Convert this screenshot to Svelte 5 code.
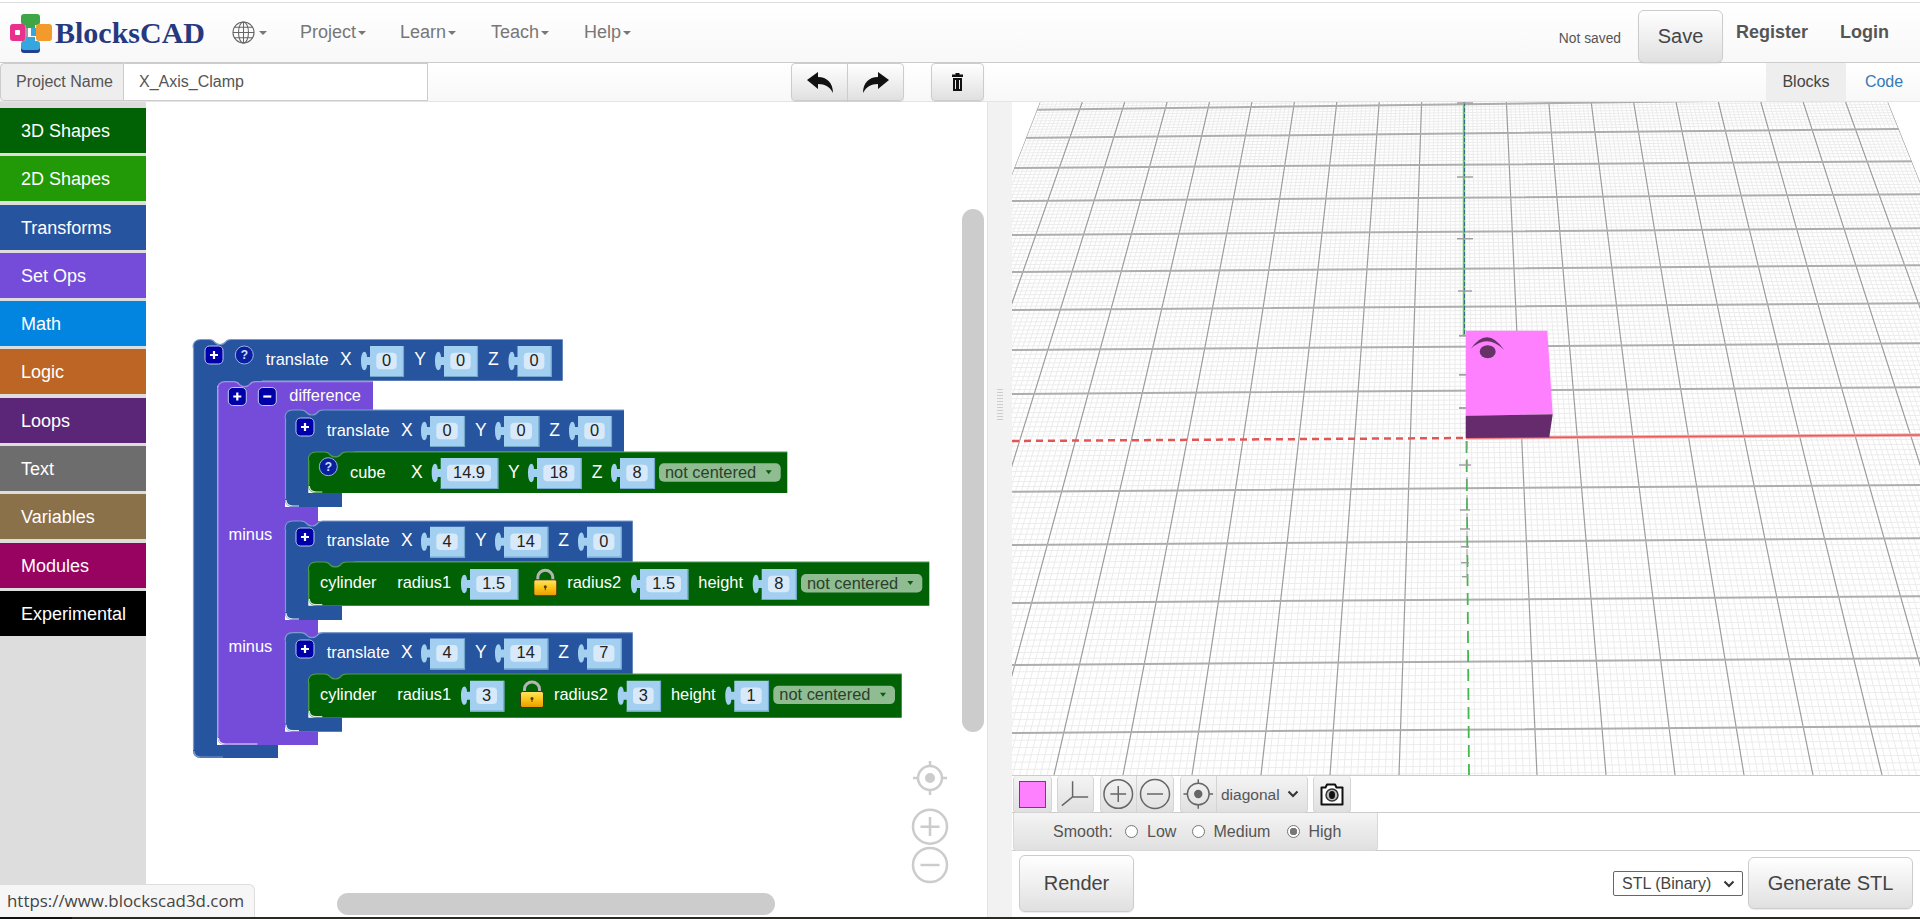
<script>
	const categories = [
		{ name: '3D Shapes', color: '#006205' },
		{ name: '2D Shapes', color: '#229906' },
		{ name: 'Transforms', color: '#26549e' },
		{ name: 'Set Ops', color: '#744cd9' },
		{ name: 'Math', color: '#0185e0' },
		{ name: 'Logic', color: '#bd6524' },
		{ name: 'Loops', color: '#5b2678' },
		{ name: 'Text', color: '#6d6d6d' },
		{ name: 'Variables', color: '#8a714a' },
		{ name: 'Modules', color: '#980261' },
		{ name: 'Experimental', color: '#000000' }
	];
	const navItems = [
		{ name: 'Project', width: 100 },
		{ name: 'Learn', width: 91 },
		{ name: 'Teach', width: 93 },
		{ name: 'Help', width: 60 }
	];

	// grid of the 3D view, in page coordinates
	const vp = { x: 1457.6, y: -971 };
	const gridX = (k, y) => vp.x + (y - vp.y) * (0.03952 * k + 0.00594);
	const rows = [84, 110, 138, 168, 201, 235, 272, 310, 350, 394, 441, 491.7, 545, 603, 665, 733, 806];
	const slope = (i) => 0.0075 + 0.008 * Math.max(0, 3 - i) / 3;
	function hLine(y, s) {
		return `M1012 ${y.toFixed(1)}L1920 ${(y - 908 * s).toFixed(1)}`;
	}
	let minorD = '';
	for (let k = -100; k <= 100; k++) {
		if (k % 10) minorD += `M${gridX(k / 10, 102).toFixed(1)} 102L${gridX(k / 10, 775).toFixed(1)} 775`;
	}
	for (let i = 0; i < rows.length - 1; i++) {
		for (let j = 1; j < 10; j++) {
			minorD += hLine(rows[i] + ((rows[i + 1] - rows[i]) * j) / 10, slope(i));
		}
	}
	let majorV = '';
	for (let k = -10; k <= 10; k++) {
		if (k) majorV += `M${gridX(k, 102).toFixed(1)} 102L${gridX(k, 775).toFixed(1)} 775`;
	}
	const majorH = rows.filter((y) => y !== 441).map((y) => hLine(y, slope(rows.indexOf(y)))).join('');
	const plane = `${gridX(-10, 102)},102 ${gridX(10, 102)},102 ${gridX(10, 775)},775 ${gridX(-10, 775)},775`;
	const ticks = [
		[103, 16], [177, 16], [238.7, 16], [291, 14], [335.7, 12], [374.7, 12], [408, 12],
		[465, 12], [510, 10], [529, 10], [546.7, 8], [562.7, 8], [576.7, 6]
	];

	// blocks
	const notch = 'q4 0 6 3q2 2 5 2q3 0 5-2q2-3 6-3';
	const top = (x, t, r) => `M${x} ${t + 8}Q${x} ${t} ${x + 8} ${t}H${x + 16}${notch}H${r}`;
	const cBlock = (x, t, r, hb, ix, ib, tr, b) =>
		`${top(x, t, r)}V${hb}H${ix + 46}V${hb + 5}H${ix}V${ib}H${tr}V${b}H${x + 8}Q${x} ${b} ${x} ${b - 8}Z`;
	const stmt = (x, t, r, b) => `${top(x, t, r)}V${b}H${x + 8}Q${x} ${b} ${x} ${b - 8}Z`;
	const corner = (x, b, w) => `M${x + 1} ${b - 7}Q${x + 1} ${b - 1} ${x + 8} ${b - 1}H${x + w}`;

	const blue = [
		[285, 410, 624, 451.7, 308.3, 493, 342, 507],
		[285, 521, 632.7, 561.7, 308.3, 605.7, 342, 620],
		[285, 632.7, 632.7, 674, 308.3, 717.7, 342, 731.7]
	];
	const green = [
		[308.3, 452, 787.3, 493],
		[308.3, 562, 929.3, 605.7],
		[308.3, 674, 901.7, 717.7]
	];
	const outer = `${top(193, 339.5, 562.7)}V380.7H262V386H217V745H278V758H201Q193 758 193 750Z`;
	const purple = `${top(217.5, 381.7, 373)}V410H330V415H285V507H318V521H330V526H285V620H318V632.7H330V637H285V731.7H318V745H226Q217.5 745 217.5 737Z`;

	const labels = [
		['translate', 265.7, 365], ['X', 340, 365], ['Y', 414.3, 365], ['Z', 488, 365],
		['difference', 289.3, 401],
		['translate', 326.7, 436], ['X', 401, 436], ['Y', 475, 436], ['Z', 549.3, 436],
		['cube', 350, 478], ['X', 411, 478], ['Y', 508, 478], ['Z', 591.7, 478],
		['minus', 228.5, 540],
		['translate', 326.7, 546], ['X', 401, 546], ['Y', 475, 546], ['Z', 558.3, 546],
		['cylinder', 320, 588], ['radius1', 397.3, 588], ['radius2', 567.3, 588], ['height', 698.3, 588],
		['minus', 228.5, 652],
		['translate', 326.7, 658], ['X', 401, 658], ['Y', 475, 658], ['Z', 558.3, 658],
		['cylinder', 320, 700], ['radius1', 397.3, 700], ['radius2', 554, 700], ['height', 671, 700]
	];
	// [value, body left, body right, top]
	const plugs = [
		['0', 370, 404, 346], ['0', 444, 478, 346], ['0', 517.5, 551.7, 346],
		['0', 430, 465, 416], ['0', 504, 539.3, 416], ['0', 578, 612, 416],
		['14.9', 440.7, 498.3, 458], ['18', 537, 581.7, 458], ['8', 620, 655, 458],
		['4', 430, 465, 526.7], ['14', 504, 548.3, 526.7], ['0', 587, 621.7, 526.7],
		['1.5', 470, 518.3, 569], ['1.5', 640, 688.3, 569], ['8', 761.7, 796.7, 569],
		['4', 430, 465, 638.4], ['14', 504, 548.3, 638.4], ['7', 587, 621.7, 638.4],
		['3', 470, 504.3, 680.7], ['3', 626.7, 661, 680.7], ['1', 734.3, 769, 680.7]
	];
	const plugPath = (b, r, y) =>
		`M${b} ${y}H${r}V${y + 31}H${b}V${y + 19}H${b - 3}C${b - 3} ${y + 26} ${b - 9} ${y + 27} ${b - 9} ${y + 15}C${b - 9} ${y + 3} ${b - 3} ${y + 4} ${b - 3} ${y + 11}H${b}Z`;
	const notCentered = [[659, 780.7, 463.3], [801, 922.3, 574], [773.3, 895, 685.7]];
	const plusButtons = [[205, 346], [228.3, 387.5], [296, 418], [296, 528], [296, 640]];
	const helpButtons = [[244.3, 355], [328.3, 466.7]];
	const locks = [[533.3, 569.3], [520, 681]];
</script>

<div class="page">
	<header class="navbar">
		<div class="brand">
			<svg class="logo" viewBox="0 0 46 40" width="46" height="40">
				<path d="M12 10h6v20h-6z" fill="#9a9aa0" />
				<rect x="11" y="0" width="19" height="11" rx="3" fill="#3fa648" />
				<rect x="16" y="8" width="9" height="6" fill="#3fa648" />
				<rect x="11" y="30" width="19" height="9" rx="3" fill="#23408f" />
				<rect x="11" y="27" width="19" height="9" rx="3" fill="#35a6e0" />
				<rect x="16" y="23" width="9" height="7" fill="#35a6e0" />
				<rect x="0" y="10" width="15" height="17" rx="3" fill="#e8308c" />
				<rect x="5" y="16" width="5" height="5" rx="1" fill="#fff" />
				<rect x="26" y="10" width="16" height="17" rx="3" fill="#f39a2d" />
				<rect x="21" y="14" width="5" height="8" fill="#35a6e0" />
			</svg>
			<span class="brand-name">BlocksCAD</span>
		</div>
		<div class="globe">
			<svg viewBox="0 0 24 24" width="23" height="23" fill="none" stroke="#666" stroke-width="1.1">
				<circle cx="12" cy="12" r="11" />
				<ellipse cx="12" cy="12" rx="5.2" ry="11" />
				<path d="M12 1v22M1 12h22M2.5 6.5h19M2.5 17.500h19" />
			</svg>
			<span class="caret"></span>
		</div>
		<nav class="menu">
			{#each navItems as item}
				<span class="menu-item" style="width: {item.width}px">{item.name}<span class="caret"></span></span>
			{/each}
		</nav>
		<div class="nav-right">
			<span class="not-saved">Not saved</span>
			<button class="btn save">Save</button>
			<span class="auth register">Register</span>
			<span class="auth login">Login</span>
		</div>
	</header>

	<div class="subbar">
		<div class="project-group">
			<span class="addon">Project Name</span>
			<input class="project-input" value="X_Axis_Clamp" />
		</div>
		<div class="history">
			<button class="btn icon-btn left-btn" aria-label="undo">
				<svg viewBox="0 0 26 21" width="26" height="21"><path d="M0 8 11 0v5c9 0 15 6 15 16-3-6-8-9-15-9v5z" /></svg>
			</button>
			<button class="btn icon-btn right-btn" aria-label="redo">
				<svg viewBox="0 0 26 21" width="26" height="21"><path d="M26 8 15 0v5C6 5 0 11 0 21c3-6 8-9 15-9v5z" /></svg>
			</button>
			<button class="btn icon-btn trash" aria-label="delete">
				<svg viewBox="0 0 11 18" width="11" height="18"><path d="M3.500 0h4v1.500h3.500v2.500H0V1.500h3.500zM1 5h9v13H1zM3 7v9h1V7zm4 0v9h1V7z" fill-rule="evenodd" /></svg>
			</button>
		</div>
		<div class="tabs">
			<span class="tab active">Blocks</span>
			<span class="tab code">Code</span>
		</div>
	</div>

	<main class="main">
		<aside class="toolbox">
			{#each categories as cat}
				<div class="category" style="background: {cat.color}">{cat.name}</div>
			{/each}
		</aside>

		<section class="workspace">
			<svg class="blocks" viewBox="146 102 841 815">
				<defs>
					<linearGradient id="gold" x1="0" y1="0" x2="0" y2="1">
						<stop offset="0" stop-color="#ffe566" />
						<stop offset="0.5" stop-color="#fbc515" />
						<stop offset="1" stop-color="#e79a00" />
					</linearGradient>
				</defs>
				<path d={outer} fill="#26549e" />
				<path d={top(193, 339.5, 562.7)} class="edge" stroke="#7c9ccd" />
				<path d={corner(193, 758, 30)} class="edge" stroke="#7c9ccd" />
				<path d="M193.500 347V750" class="edge" stroke="#7c9ccd" />
				<path d={purple} fill="#744cd9" />
				<path d={top(217.5, 381.7, 373)} class="edge" stroke="#a68ee8" />
				<path d="M218 389V737" class="edge" stroke="#a68ee8" />
				<path d={corner(217.5, 745, 40)} class="edge" stroke="#e8e0fa" />
				{#each blue as b}
					<path d={cBlock(...b)} fill="#26549e" />
					<path d={top(b[0], b[1], b[2])} class="edge" stroke="#7c9ccd" />
					<path d="M{b[0] + 0.5} {b[1] + 8}V{b[7] - 8}" class="edge" stroke="#7c9ccd" />
					<path d={corner(b[0], b[7], 14)} class="edge" stroke="#dfe8f5" />
				{/each}
				{#each green as g}
					<path d={stmt(...g)} fill="#006205" />
					<path d={top(g[0], g[1], g[2])} class="edge" stroke="#4f9a53" />
					<path d="M{g[0] + 0.5} {g[1] + 8}V{g[3] - 8}" class="edge" stroke="#4f9a53" />
					<path d={corner(g[0], g[3], 14)} class="edge" stroke="#d6e8d7" />
				{/each}

				{#each plugs as [value, b, r, y]}
					<path d={plugPath(b, r, y)} fill="#a3d0f0" />
					<path d="M{b} {y + 30.500}H{r - 0.5}V{y}" class="edge" stroke="#74a7cc" />
					<rect x={b + 6.3} y={y + 6.7} width={r - b - 13.6} height="16.600" rx="4" fill="#d8e9f9" />
					<text class="value" x={(b + r - 1) / 2} y={y + 20}>{value}</text>
				{/each}

				{#each labels as [text, x, y]}
					<text class="label" class:axis-letter={text.length === 1} {x} {y}>{text}</text>
				{/each}

				{#each notCentered as [x, r, y]}
					<rect {x} {y} width={r - x} height="18.400" rx="5" fill="#8fbd91" />
					<text class="drop-text" x={x + 6} y={y + 14.7}>not centered</text>
					<path d="M{r - 15} {y + 7}h6l-3 4z" fill="#0d5c12" />
				{/each}

				{#each plusButtons as [x, y]}
					<rect {x} {y} width="18" height="18" rx="4.500" class="small-btn" />
					<path d="M{x + 5} {y + 9}h8M{x + 9} {y + 5}v8" class="glyph" />
				{/each}
				<rect x="258.300" y="387.500" width="18" height="18" rx="4.500" class="small-btn" />
				<path d="M263.300 396.500h8" class="glyph" />
				{#each helpButtons as [cx, cy]}
					<circle {cx} {cy} r="9" class="help-btn" />
					<text class="help-text" x={cx} y={cy + 4}>?</text>
				{/each}

				{#each locks as [x, y]}
					<path d="M{x + 4.5} {y + 11}v-3a7.500 7 0 0 1 15 0v3" fill="none" stroke="#b4b4b4" stroke-width="3" />
					<rect x={x + 0.5} y={y + 10.500} width="23" height="16" rx="2" fill="url(#gold)" stroke="#3e3210" />
					<circle cx={x + 12} cy={y + 17.500} r="1.500" fill="#5a3c00" />
					<path d="M{x + 11.5} {y + 18}h1v3h-1z" fill="#5a3c00" />
				{/each}

				<g class="controls">
					<circle cx="930" cy="778" r="12" />
					<circle cx="930" cy="778" r="5" class="dot" />
					<path d="M930 761v6M930 789v6M913 778h6M941 778h6" />
					<circle cx="930" cy="826.700" r="17" />
					<path d="M930 817v19M920.500 826.700h19" />
					<circle cx="930" cy="865" r="17" />
					<path d="M920.500 865h19" />
				</g>
			</svg>
			<div class="scroll-v"></div>
			<div class="scroll-h"></div>
			<div class="status">https://www.blockscad3d.com</div>
		</section>

		<div class="splitter"><span class="grip"></span></div>

		<section class="viewer-pane">
			<div class="viewer">
				<svg class="grid" viewBox="1012 102 908 673">
					<clipPath id="plane"><polygon points={plane} /></clipPath>
					<g clip-path="url(#plane)">
						<path d={minorD} class="minor" />
						<path d={majorV} class="major-v" />
						<path d={majorH} class="major-h" />
					</g>
					<path d="M1464 102V335" class="axis-green" />
					<path d="M1464.500 102V335" class="axis-blue" />
					<path d="M1466.500 441L1469 775" class="axis-dash" />
					<path d="M1012 441L1466 438" class="red-dash" />
					<path d="M1466 438L1920 435" class="red-glow" />
					<path d="M1466 438L1920 435" class="red-solid" />
					{#each ticks as [y, w]}
						<path d="M{1465 - w / 2} {y}h{w}" class="tick" />
					{/each}
					<path d="M1467 441V580" class="axis-tick-line" />
					<polygon points="1465.700,330.700 1547.300,330.700 1552.700,414.300 1465.700,415.700" fill="#ff80ff" />
					<polygon points="1465.700,415.700 1552.700,414.300 1549.300,437.300 1465.700,438" fill="#662b6c" />
					<ellipse cx="1487.700" cy="351.700" rx="8" ry="6.500" fill="#663366" />
					<path d="M1470.700 349Q1487 325 1504.300 350Q1487 333 1470.700 349Z" fill="#663366" />
					{#each ticks.slice(4, 7) as [y]}
						<path d="M1459 {y}h7" class="tick" />
					{/each}
				</svg>
			</div>

			<div class="view-tools">
				<button class="tool swatch-btn" aria-label="color"><span class="swatch"></span></button>
				<button class="tool axis-btn" aria-label="axes">
					<svg viewBox="0 0 36 36" width="36" height="36"><path d="M15 5v16h16M15 21 4 30" /></svg>
				</button>
				<div class="tool-group">
					<button class="tool joined" aria-label="zoom in">
						<svg viewBox="0 0 36 36" width="36" height="36"><circle cx="17.500" cy="18" r="14.500" /><path d="M17.500 10v16M9.500 18h16" /></svg>
					</button>
					<button class="tool joined-end" aria-label="zoom out">
						<svg viewBox="0 0 36 36" width="36" height="36"><circle cx="18" cy="18" r="14.500" /><path d="M10 18h16" /></svg>
					</button>
				</div>
				<div class="tool-group">
					<button class="tool joined" aria-label="reset view">
						<svg viewBox="0 0 36 36" width="36" height="36"><circle cx="17.500" cy="18" r="11" /><circle cx="17.500" cy="18" r="3.500" class="filled" /><path d="M17.500 3v4M17.500 29v4M2.500 18h4M28.500 18h4" /></svg>
					</button>
					<div class="tool joined-end view-select">
						<select class="diagonal"><option>diagonal</option></select>
						<svg class="chevron" viewBox="0 0 12 8" width="12" height="8"><path d="M1.500 1.500 6 6l4.500-4.500" /></svg>
					</div>
				</div>
				<button class="tool camera" aria-label="camera">
					<svg viewBox="0 0 24 24" width="24" height="24">
						<path d="M1.500 5.500h4l1.500-3h8l1.500 3h6v17h-21z" fill="#fff" stroke="#111" stroke-width="2" stroke-linejoin="round" />
						<circle cx="12" cy="13" r="6" fill="#bbb" stroke="#333" />
						<ellipse cx="12" cy="13" rx="3" ry="4" fill="#111" />
					</svg>
				</button>
			</div>

			<div class="smooth-row">
				<div class="smooth">
					<span class="smooth-title">Smooth:</span>
					<label class="opt low"><span class="radio"></span>Low</label>
					<label class="opt medium"><span class="radio"></span>Medium</label>
					<label class="opt"><span class="radio on"></span>High</label>
				</div>
			</div>

			<div class="render-row">
				<button class="btn render">Render</button>
				<div class="stl-select">
					<select class="format"><option>STL (Binary)</option></select>
					<svg class="chevron" viewBox="0 0 12 8" width="12" height="8"><path d="M1.500 1.500 6 6l4.500-4.500" /></svg>
				</div>
				<button class="btn generate">Generate STL</button>
			</div>
		</section>
	</main>

	<div class="bottom-strip"><span class="strip-dark"></span></div>
</div>

<style>
	:global(body) {
		margin: 0;
		background: #fff;
		overflow: hidden;
	}
	.page {
		width: 1920px;
		height: 919px;
		display: flex;
		flex-direction: column;
		font-family: 'Liberation Sans', Arial, sans-serif;
		color: #555;
		position: relative;
		overflow: hidden;
	}
	button {
		font-family: inherit;
		padding: 0;
	}
	.btn {
		background: linear-gradient(#fff, #e0e0e0);
		border: 1px solid #ccc;
		border-radius: 6px;
		color: #444;
		box-shadow: 0 1px 1px rgba(0, 0, 0, 0.08);
	}

	/* top bar */
	.navbar {
		height: 59px;
		margin-top: 2px;
		border-top: 1px solid #ddd;
		border-bottom: 1px solid #ccc;
		background: linear-gradient(#fff, #f8f8f8);
		display: flex;
		align-items: center;
		flex-shrink: 0;
	}
	.brand {
		width: 225px;
		display: flex;
		align-items: center;
		padding-left: 10px;
		box-sizing: border-box;
	}
	.logo {
		flex-shrink: 0;
		margin-top: 2px;
	}
	.brand-name {
		font-family: 'Liberation Serif', serif;
		font-weight: bold;
		font-size: 30px;
		color: #26387e;
		margin-left: -1px;
	}
	.globe {
		width: 75px;
		padding-left: 7px;
		box-sizing: border-box;
		display: flex;
		align-items: center;
		gap: 2px;
	}
	.caret {
		display: inline-block;
		border-top: 4px solid #777;
		border-left: 4px solid transparent;
		border-right: 4px solid transparent;
		margin-left: 2px;
		vertical-align: middle;
	}
	.menu {
		display: flex;
	}
	.menu-item {
		font-size: 18px;
		color: #777;
		white-space: nowrap;
	}
	.nav-right {
		margin-left: auto;
		display: flex;
		align-items: center;
		height: 100%;
		position: relative;
	}
	.not-saved {
		font-size: 13.800px;
		margin-top: 12px;
		margin-right: 17px;
	}
	.save {
		width: 85px;
		height: 53px;
		font-size: 20px;
		margin-top: 7px;
		margin-right: 13px;
	}
	.auth {
		font-size: 18px;
		font-weight: bold;
		margin-top: 0;
	}
	.register {
		margin-right: 32px;
	}
	.login {
		margin-right: 31px;
	}

	/* second bar */
	.subbar {
		height: 39px;
		flex-shrink: 0;
		display: flex;
		align-items: flex-start;
		background: linear-gradient(#fff, #f8f8f8);
		border-bottom: 1px solid #e4e4e4;
		box-sizing: border-box;
	}
	.project-group {
		display: flex;
		height: 38px;
		width: 428px;
		font-size: 16px;
	}
	.addon {
		width: 124px;
		box-sizing: border-box;
		background: #eee;
		border: 1px solid #ccc;
		border-radius: 4px 0 0 4px;
		line-height: 36px;
		padding-left: 15px;
		white-space: nowrap;
	}
	.project-input {
		flex: 1;
		min-width: 0;
		border: 1px solid #ccc;
		border-left: 0;
		background: #fff;
		font: inherit;
		color: #555;
		padding: 0 0 0 15px;
		outline: 0;
	}
	.history {
		margin-left: 363px;
		display: flex;
	}
	.icon-btn {
		width: 57px;
		height: 38px;
		border-radius: 4px;
		display: flex;
		align-items: center;
		justify-content: center;
	}
	.icon-btn svg {
		fill: #111;
	}
	.left-btn {
		border-radius: 4px 0 0 4px;
	}
	.right-btn {
		margin-left: -1px;
		border-radius: 0 4px 4px 0;
	}
	.trash {
		width: 53px;
		margin-left: 27px;
	}
	.tabs {
		margin-left: auto;
		display: flex;
		font-size: 16px;
		height: 38px;
		line-height: 38px;
	}
	.tab {
		text-align: center;
	}
	.tab.active {
		width: 80px;
		background: #eee;
		color: #444;
	}
	.tab.code {
		width: 72px;
		padding-left: 2px;
		color: #337ab7;
	}

	/* main */
	.main {
		flex: 1;
		display: flex;
		min-height: 0;
	}
	.toolbox {
		width: 146px;
		flex-shrink: 0;
		background: #ddd;
		padding-top: 6px;
		box-sizing: border-box;
		display: flex;
		flex-direction: column;
		gap: 3.300px;
	}
	.category {
		height: 45px;
		line-height: 47px;
		padding-left: 21px;
		color: #fff;
		font-size: 18px;
		flex-shrink: 0;
	}
	.workspace {
		width: 841px;
		flex-shrink: 0;
		position: relative;
		background: #fff;
	}
	.blocks {
		display: block;
		width: 100%;
		height: 100%;
	}
	.edge {
		fill: none;
		stroke-width: 1.200;
	}
	.label {
		font-size: 16.400px;
		fill: #fff;
	}
	.axis-letter {
		font-size: 17.500px;
	}
	.value {
		font-size: 16.400px;
		fill: #222;
		text-anchor: middle;
	}
	.drop-text {
		font-size: 16.400px;
		fill: #2b3f2c;
	}
	.small-btn {
		fill: #0000a8;
		stroke: #b8c8ee;
		stroke-width: 1;
	}
	.glyph {
		stroke: #fff;
		stroke-width: 2.200;
		fill: none;
	}
	.help-btn {
		fill: #0a1fa0;
		stroke: #9db2e0;
		stroke-width: 1;
	}
	.help-text {
		font-size: 12px;
		font-weight: bold;
		fill: #cfe0ff;
		text-anchor: middle;
	}
	.controls circle,
	.controls path {
		fill: none;
		stroke: #ccc;
		stroke-width: 2.500;
	}
	.controls .dot {
		fill: #ccc;
		stroke: none;
	}
	.scroll-v {
		position: absolute;
		left: 816px;
		top: 107px;
		width: 22px;
		height: 523px;
		border-radius: 11px;
		background: #ccc;
	}
	.scroll-h {
		position: absolute;
		left: 191px;
		top: 791px;
		width: 438px;
		height: 22px;
		border-radius: 11px;
		background: #ccc;
	}
	.status {
		position: absolute;
		left: -146px;
		bottom: 0;
		width: 255px;
		height: 33px;
		box-sizing: border-box;
		background: #f6f6f6;
		border: 1px solid #ddd;
		border-left: 0;
		border-bottom: 0;
		border-top-right-radius: 6px;
		padding-left: 7px;
		font-family: 'Open Sans', sans-serif;
		font-size: 16.900px;
		line-height: 31px;
		color: #444;
		white-space: nowrap;
	}
	.splitter {
		width: 25px;
		flex-shrink: 0;
		background: #f2f2f2;
		display: flex;
		align-items: center;
		justify-content: center;
		border-left: 1px solid #e4e4e4;
		box-sizing: border-box;
	}
	.grip {
		display: block;
		width: 6px;
		height: 32px;
		margin-bottom: 210px;
		background: repeating-linear-gradient(#ccc 0 1px, transparent 1px 3px);
	}

	/* 3D view */
	.viewer-pane {
		flex: 1;
		min-width: 0;
		display: flex;
		flex-direction: column;
	}
	.viewer {
		height: 673px;
		flex-shrink: 0;
		background: #fff;
	}
	.grid {
		display: block;
		width: 908px;
		height: 673px;
	}
	.minor {
		fill: none;
		stroke: #ececec;
		stroke-width: 1;
	}
	.major-v {
		fill: none;
		stroke: #9c9c9c;
		stroke-width: 1.200;
	}
	.major-h {
		fill: none;
		stroke: #adadad;
		stroke-width: 2;
	}
	.axis-green {
		stroke: #66c86a;
		stroke-width: 2.500;
		fill: none;
	}
	.axis-blue {
		stroke: #3a6a88;
		stroke-width: 1;
		stroke-dasharray: 4 2;
		fill: none;
	}
	.axis-dash {
		stroke: #45b64f;
		stroke-width: 1.800;
		stroke-dasharray: 12 7;
		fill: none;
	}
	.axis-tick-line {
		stroke: #999;
		stroke-width: 1;
		stroke-dasharray: 8 10;
	}
	.red-dash {
		stroke: #e25555;
		stroke-width: 2.500;
		stroke-dasharray: 7 5;
		fill: none;
	}
	.red-glow {
		stroke: #f7b0b0;
		stroke-width: 3.500;
		fill: none;
	}
	.red-solid {
		stroke: #e65c5c;
		stroke-width: 1.500;
		fill: none;
	}
	.tick {
		stroke: #a0a0a0;
		stroke-width: 1.500;
		fill: none;
	}

	.view-tools {
		height: 38px;
		flex-shrink: 0;
		box-sizing: border-box;
		border-top: 1px solid #ccc;
		border-bottom: 1px solid #ccc;
		display: flex;
		align-items: stretch;
		padding-left: 1px;
		background: #fff;
	}
	.tool {
		height: 37px;
		box-sizing: border-box;
		background: linear-gradient(#f4f4f4, #e0e0e0);
		border: 1px solid #d4d4d4;
		border-top: 0;
		border-radius: 4px;
		display: flex;
		align-items: center;
		justify-content: center;
	}
	.tool svg {
		fill: none;
		stroke: #666;
		stroke-width: 1.500;
	}
	.tool svg .filled {
		fill: #666;
	}
	.swatch-btn {
		width: 39px;
	}
	.swatch {
		width: 27px;
		height: 27px;
		box-sizing: border-box;
		background: #ff80ff;
		border: 1px solid #555;
	}
	.axis-btn {
		width: 37px;
		margin-left: 5px;
	}
	.tool-group {
		display: flex;
		margin-left: 5.500px;
	}
	.joined {
		width: 37.500px;
		border-radius: 4px 0 0 4px;
	}
	.joined-end {
		width: 37px;
		border-left: 0;
		border-radius: 0 4px 4px 0;
	}
	.view-select {
		width: 91px;
		position: relative;
		justify-content: flex-start;
	}
	.diagonal {
		appearance: none;
		border: 0;
		background: transparent;
		font: 15.500px 'Liberation Sans', Arial, sans-serif;
		color: #555;
		padding: 0 0 0 4px;
		width: 100%;
		height: 100%;
		outline: 0;
	}
	.chevron {
		position: absolute;
		right: 8px;
		top: 14px;
		pointer-events: none;
		fill: none;
	}
	.chevron path {
		stroke: #333;
		stroke-width: 2;
		fill: none;
	}
	.camera {
		width: 38px;
		margin-left: 5px;
	}
	.camera svg {
		stroke: none;
	}
	.smooth-row {
		height: 38px;
		flex-shrink: 0;
		box-sizing: border-box;
		border-bottom: 1px solid #ccc;
		padding-left: 1px;
		background: #fff;
	}
	.smooth {
		width: 365px;
		height: 38px;
		box-sizing: border-box;
		background: linear-gradient(#f4f4f4, #e0e0e0);
		border-radius: 0 0 4px 4px;
		border: 1px solid #d8d8d8;
		border-top: 0;
		display: flex;
		align-items: center;
		padding-left: 39px;
		font-size: 16px;
		color: #555;
	}
	.smooth-title {
		width: 72px;
	}
	.opt {
		display: flex;
		align-items: center;
		gap: 6px;
	}
	.low {
		width: 66.500px;
	}
	.medium {
		width: 95px;
	}
	.radio {
		width: 13px;
		height: 13px;
		box-sizing: border-box;
		border-radius: 50%;
		border: 1px solid #777;
		background: #fff;
		margin-right: 3px;
		display: block;
		position: relative;
		top: 0;
		flex-shrink: 0;
	}
	.radio.on {
		background: radial-gradient(#777 0 3.500px, #fff 4px);
	}
	.render-row {
		flex: 1;
		display: flex;
		align-items: center;
		padding: 0 7px 2px;
	}
	.render {
		width: 115px;
		height: 57px;
		font-size: 20px;
		border-radius: 6px;
	}
	.stl-select {
		margin-left: auto;
		position: relative;
		width: 130px;
		height: 25px;
		margin-right: 5px;
	}
	.format {
		appearance: none;
		width: 100%;
		height: 100%;
		border: 1px solid #666;
		border-radius: 2px;
		background: #fff;
		font: 16px 'Liberation Sans', Arial, sans-serif;
		color: #444;
		padding: 0 0 0 8px;
		outline: 0;
	}
	.stl-select .chevron {
		right: 8px;
		top: 9px;
	}
	.generate {
		width: 165px;
		height: 52px;
		font-size: 20px;
	}
	.bottom-strip {
		height: 2px;
		flex-shrink: 0;
		background: #2a2a20;
		display: flex;
	}
	.strip-dark {
		width: 72px;
		background: #111;
	}
</style>
